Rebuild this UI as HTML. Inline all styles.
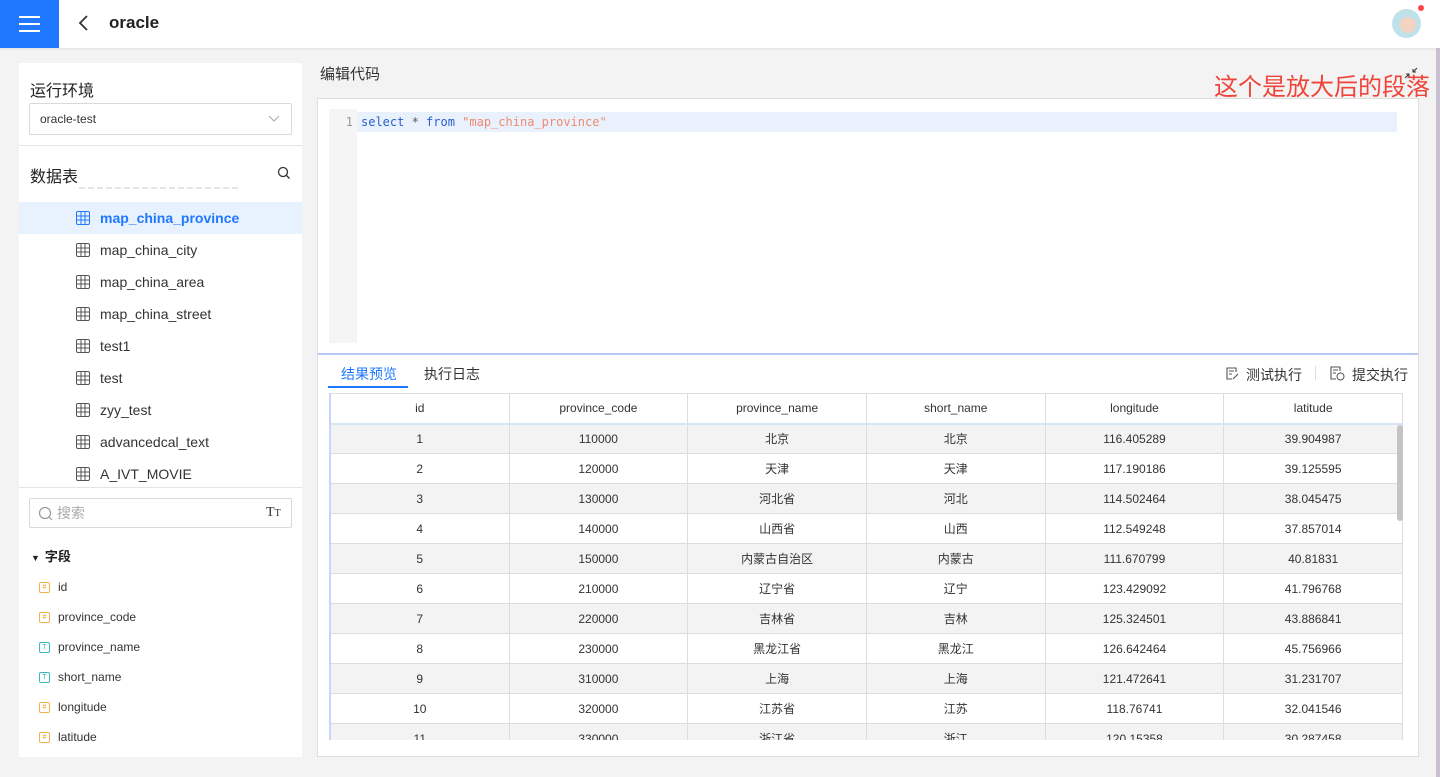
<!DOCTYPE html>
<html><head><meta charset="utf-8"><style>
*{box-sizing:border-box;margin:0;padding:0}
body{width:1440px;height:777px;background:#f3f3f3;font-family:"Liberation Sans","Noto Sans CJK SC",sans-serif;color:#333;position:relative;overflow:hidden}
.abs{position:absolute}
.hdr{left:0;top:0;width:1440px;height:48px;background:#fff;box-shadow:0 1px 3px rgba(0,0,0,.08)}
.menu{left:0;top:0;width:59px;height:48px;background:#1f78ff}
.menu i{position:absolute;left:19px;width:21px;height:2px;background:#fff}
.left{left:19px;top:63px;width:283px;height:694px;background:#fff}
.tbl-item{position:absolute;left:0;width:283px;height:32px;font-size:14px;line-height:32px;padding-left:81px;color:#333}
.tbl-item svg{position:absolute;left:57px;top:9px}
.field{position:absolute;left:20px;font-size:12px;color:#333}
.field b{position:absolute;left:0;top:2px;width:11px;height:11px;border:1px solid;border-radius:2px;font-size:7px;line-height:9px;text-align:center;font-weight:normal}
.field span{padding-left:19px}
.grid{border-collapse:collapse;font-size:12px;color:#333;table-layout:fixed}
.grid td,.grid th{border:1px solid #ddd;text-align:center;height:30px;font-weight:normal;width:179px}
.grid tr:nth-child(even) td{background:#f3f3f3}
</style></head><body>
<div class="abs hdr"></div>
<div class="abs menu"><i style="top:16px"></i><i style="top:23px"></i><i style="top:30px"></i></div>
<svg class="abs" style="left:78px;top:15px" width="12" height="16"><path d="M9 1L2 8l7 7" stroke="#333" stroke-width="1.8" fill="none"/></svg>
<div class="abs" style="left:109px;top:13px;font-size:17px;font-weight:bold;color:#222">oracle</div>
<div class="abs" style="left:1392px;top:9px;width:29px;height:29px;border-radius:50%;background:radial-gradient(circle at 55% 55%,#f3d3c2 0 35%,#bfe1ea 36% 70%,#ddd 71%)"></div>
<div class="abs" style="left:1418px;top:5px;width:6px;height:6px;border-radius:50%;background:#f44"></div>
<div class="abs" style="left:1436px;top:48px;width:4px;height:729px;background:#c8c0d0"></div>

<div class="abs left">
 <div class="abs" style="left:11px;top:14px;font-size:16px;color:#222">运行环境</div>
 <div class="abs" style="left:10px;top:40px;width:263px;height:32px;border:1px solid #d9d9d9;border-radius:2px;font-size:12px;line-height:30px;padding-left:10px">oracle-test
  <svg class="abs" style="right:11px;top:11px" width="12" height="8"><path d="M1 1l5 5 5-5" stroke="#aaa" fill="none"/></svg></div>
 <div class="abs" style="left:0;top:82px;width:283px;height:1px;background:#e5e5e5"></div>
 <div class="abs" style="left:11px;top:100px;font-size:16px;color:#222">数据表</div>
 <svg class="abs" style="left:258px;top:103px" width="14" height="14"><circle cx="6" cy="6" r="4.5" stroke="#333" fill="none" stroke-width="1.3"/><path d="M9.5 9.5l3 3" stroke="#333" stroke-width="1.3"/></svg>
 <div class="abs" style="left:60px;top:124px;width:160px;height:2px;background:repeating-linear-gradient(90deg,#e4e4e4 0 6px,transparent 6px 9px)"></div>
 <div class="tbl-item" style="top:139px;background:#e8f1fe;color:#1f78ff;font-weight:bold"><svg width="14" height="14"><rect x=".5" y=".5" width="13" height="13" rx="1.5" stroke="#1f78ff" fill="none"/><path d="M.5 5h13M.5 9h13M5 .5v13M9 .5v13" stroke="#1f78ff"/></svg>map_china_province</div>
 <div class="tbl-item" style="top:171px"><svg width="14" height="14"><rect x=".5" y=".5" width="13" height="13" rx="1.5" stroke="#555" fill="none"/><path d="M.5 5h13M.5 9h13M5 .5v13M9 .5v13" stroke="#555"/></svg>map_china_city</div>
 <div class="tbl-item" style="top:203px"><svg width="14" height="14"><rect x=".5" y=".5" width="13" height="13" rx="1.5" stroke="#555" fill="none"/><path d="M.5 5h13M.5 9h13M5 .5v13M9 .5v13" stroke="#555"/></svg>map_china_area</div>
 <div class="tbl-item" style="top:235px"><svg width="14" height="14"><rect x=".5" y=".5" width="13" height="13" rx="1.5" stroke="#555" fill="none"/><path d="M.5 5h13M.5 9h13M5 .5v13M9 .5v13" stroke="#555"/></svg>map_china_street</div>
 <div class="tbl-item" style="top:267px"><svg width="14" height="14"><rect x=".5" y=".5" width="13" height="13" rx="1.5" stroke="#555" fill="none"/><path d="M.5 5h13M.5 9h13M5 .5v13M9 .5v13" stroke="#555"/></svg>test1</div>
 <div class="tbl-item" style="top:299px"><svg width="14" height="14"><rect x=".5" y=".5" width="13" height="13" rx="1.5" stroke="#555" fill="none"/><path d="M.5 5h13M.5 9h13M5 .5v13M9 .5v13" stroke="#555"/></svg>test</div>
 <div class="tbl-item" style="top:331px"><svg width="14" height="14"><rect x=".5" y=".5" width="13" height="13" rx="1.5" stroke="#555" fill="none"/><path d="M.5 5h13M.5 9h13M5 .5v13M9 .5v13" stroke="#555"/></svg>zyy_test</div>
 <div class="tbl-item" style="top:363px"><svg width="14" height="14"><rect x=".5" y=".5" width="13" height="13" rx="1.5" stroke="#555" fill="none"/><path d="M.5 5h13M.5 9h13M5 .5v13M9 .5v13" stroke="#555"/></svg>advancedcal_text</div>
 <div class="tbl-item" style="top:395px"><svg width="14" height="14"><rect x=".5" y=".5" width="13" height="13" rx="1.5" stroke="#555" fill="none"/><path d="M.5 5h13M.5 9h13M5 .5v13M9 .5v13" stroke="#555"/></svg>A_IVT_MOVIE</div>
 <div class="abs" style="left:0;top:424px;width:283px;height:1px;background:#e5e5e5"></div>
 <div class="abs" style="left:10px;top:435px;width:263px;height:30px;border:1px solid #d9d9d9;border-radius:2px;font-size:14px;line-height:28px;padding-left:27px;color:#aaa">搜索
  <svg class="abs" style="left:8px;top:7px" width="15" height="15"><circle cx="7" cy="7" r="5.5" stroke="#999" fill="none" stroke-width="1.2"/><path d="M11 11l3 3" stroke="#999" stroke-width="1.2"/></svg>
  <span class="abs" style="left:236px;top:0;color:#333;font-family:'Liberation Serif',serif;font-size:14px">T<small style="font-size:10px">T</small></span></div>
 <div class="abs" style="left:12px;top:483px;font-size:13px;color:#222;font-weight:bold"><span style="font-size:9px;margin-right:5px">▼</span>字段</div>
 <div class="field" style="top:517px"><b style="border-color:#f5b04a;color:#f5a020">#</b><span>id</span></div>
 <div class="field" style="top:547px"><b style="border-color:#f5b04a;color:#f5a020">#</b><span>province_code</span></div>
 <div class="field" style="top:577px"><b style="border-color:#3ab8c0;color:#3ab8c0">T</b><span>province_name</span></div>
 <div class="field" style="top:607px"><b style="border-color:#3ab8c0;color:#3ab8c0">T</b><span>short_name</span></div>
 <div class="field" style="top:637px"><b style="border-color:#f5b04a;color:#f5a020">#</b><span>longitude</span></div>
 <div class="field" style="top:667px"><b style="border-color:#f5b04a;color:#f5a020">#</b><span>latitude</span></div>
</div>

<div class="abs" style="left:320px;top:63px;font-size:15px;color:#333">编辑代码</div>
<div class="abs" style="left:1214px;top:73px;font-size:24px;color:#f0443a;line-height:30px;white-space:nowrap">这个是放大后的段落</div>
<svg class="abs" style="left:1404px;top:67px" width="14" height="12"><path d="M13 1L9 5M9 2v3h3M1 11l4-4M5 10V7H2" stroke="#333" fill="none"/></svg>

<div class="abs" style="left:317px;top:98px;width:1102px;height:659px;background:#fff;border:1px solid #ddd"></div>
<div class="abs" style="left:329px;top:109px;width:28px;height:234px;background:#f5f5f5"></div>
<div class="abs" style="left:357px;top:112px;width:1040px;height:20px;background:#e8f1fc"></div>
<div class="abs" style="left:329px;top:115px;width:24px;text-align:right;font-family:'DejaVu Sans Mono',monospace;font-size:12px;color:#999">1</div>
<div class="abs" style="left:361px;top:115px;font-family:'DejaVu Sans Mono',monospace;font-size:12px;color:#2a5fd0;white-space:pre">select <span style="color:#555">*</span> from <span style="color:#f08a70">"map_china_province"</span></div>
<div class="abs" style="left:318px;top:353px;width:1100px;height:2px;background:#b8c8f2"></div>
<div class="abs" style="left:341px;top:364px;font-size:14px;color:#1f78ff">结果预览</div>
<div class="abs" style="left:328px;top:386px;width:80px;height:2px;background:#1f78ff"></div>
<div class="abs" style="left:424px;top:364px;font-size:14px;color:#333">执行日志</div>
<svg class="abs" style="left:1225px;top:366px" width="14" height="14"><path d="M11 6V2H2v11h5M4 5h5M4 8h3M8 13l5-5" stroke="#555" fill="none" stroke-width="1.1"/></svg>
<div class="abs" style="left:1246px;top:365px;font-size:14px">测试执行</div>
<div class="abs" style="left:1315px;top:366px;width:1px;height:14px;background:#ddd"></div>
<svg class="abs" style="left:1330px;top:366px" width="15" height="15"><path d="M10 5V1H1v12h5M3 4h5M3 7h3" stroke="#555" fill="none" stroke-width="1.1"/><circle cx="10.5" cy="10.5" r="3.5" stroke="#555" fill="none"/></svg>
<div class="abs" style="left:1352px;top:365px;font-size:14px">提交执行</div>

<div class="abs" style="left:329px;top:393px;width:1074px;height:347px;overflow:hidden;border-left:2px solid #c8d6f5">
<table class="grid" style="margin-left:-1px;margin-top:0">
<tr><th style="border-bottom:2px solid #d8e2f8">id</th><th style="border-bottom:2px solid #d8e2f8">province_code</th><th style="border-bottom:2px solid #d8e2f8">province_name</th><th style="border-bottom:2px solid #d8e2f8">short_name</th><th style="border-bottom:2px solid #d8e2f8">longitude</th><th style="border-bottom:2px solid #d8e2f8">latitude</th></tr>
<tr><td>1</td><td>110000</td><td>北京</td><td>北京</td><td>116.405289</td><td>39.904987</td></tr>
<tr><td>2</td><td>120000</td><td>天津</td><td>天津</td><td>117.190186</td><td>39.125595</td></tr>
<tr><td>3</td><td>130000</td><td>河北省</td><td>河北</td><td>114.502464</td><td>38.045475</td></tr>
<tr><td>4</td><td>140000</td><td>山西省</td><td>山西</td><td>112.549248</td><td>37.857014</td></tr>
<tr><td>5</td><td>150000</td><td>内蒙古自治区</td><td>内蒙古</td><td>111.670799</td><td>40.81831</td></tr>
<tr><td>6</td><td>210000</td><td>辽宁省</td><td>辽宁</td><td>123.429092</td><td>41.796768</td></tr>
<tr><td>7</td><td>220000</td><td>吉林省</td><td>吉林</td><td>125.324501</td><td>43.886841</td></tr>
<tr><td>8</td><td>230000</td><td>黑龙江省</td><td>黑龙江</td><td>126.642464</td><td>45.756966</td></tr>
<tr><td>9</td><td>310000</td><td>上海</td><td>上海</td><td>121.472641</td><td>31.231707</td></tr>
<tr><td>10</td><td>320000</td><td>江苏省</td><td>江苏</td><td>118.76741</td><td>32.041546</td></tr>
<tr><td>11</td><td>330000</td><td>浙江省</td><td>浙江</td><td>120.15358</td><td>30.287458</td></tr>
</table>
<div class="abs" style="right:0;top:32px;width:6px;height:96px;background:#c4c4c4;border-radius:3px"></div>
</div>
</body></html>
